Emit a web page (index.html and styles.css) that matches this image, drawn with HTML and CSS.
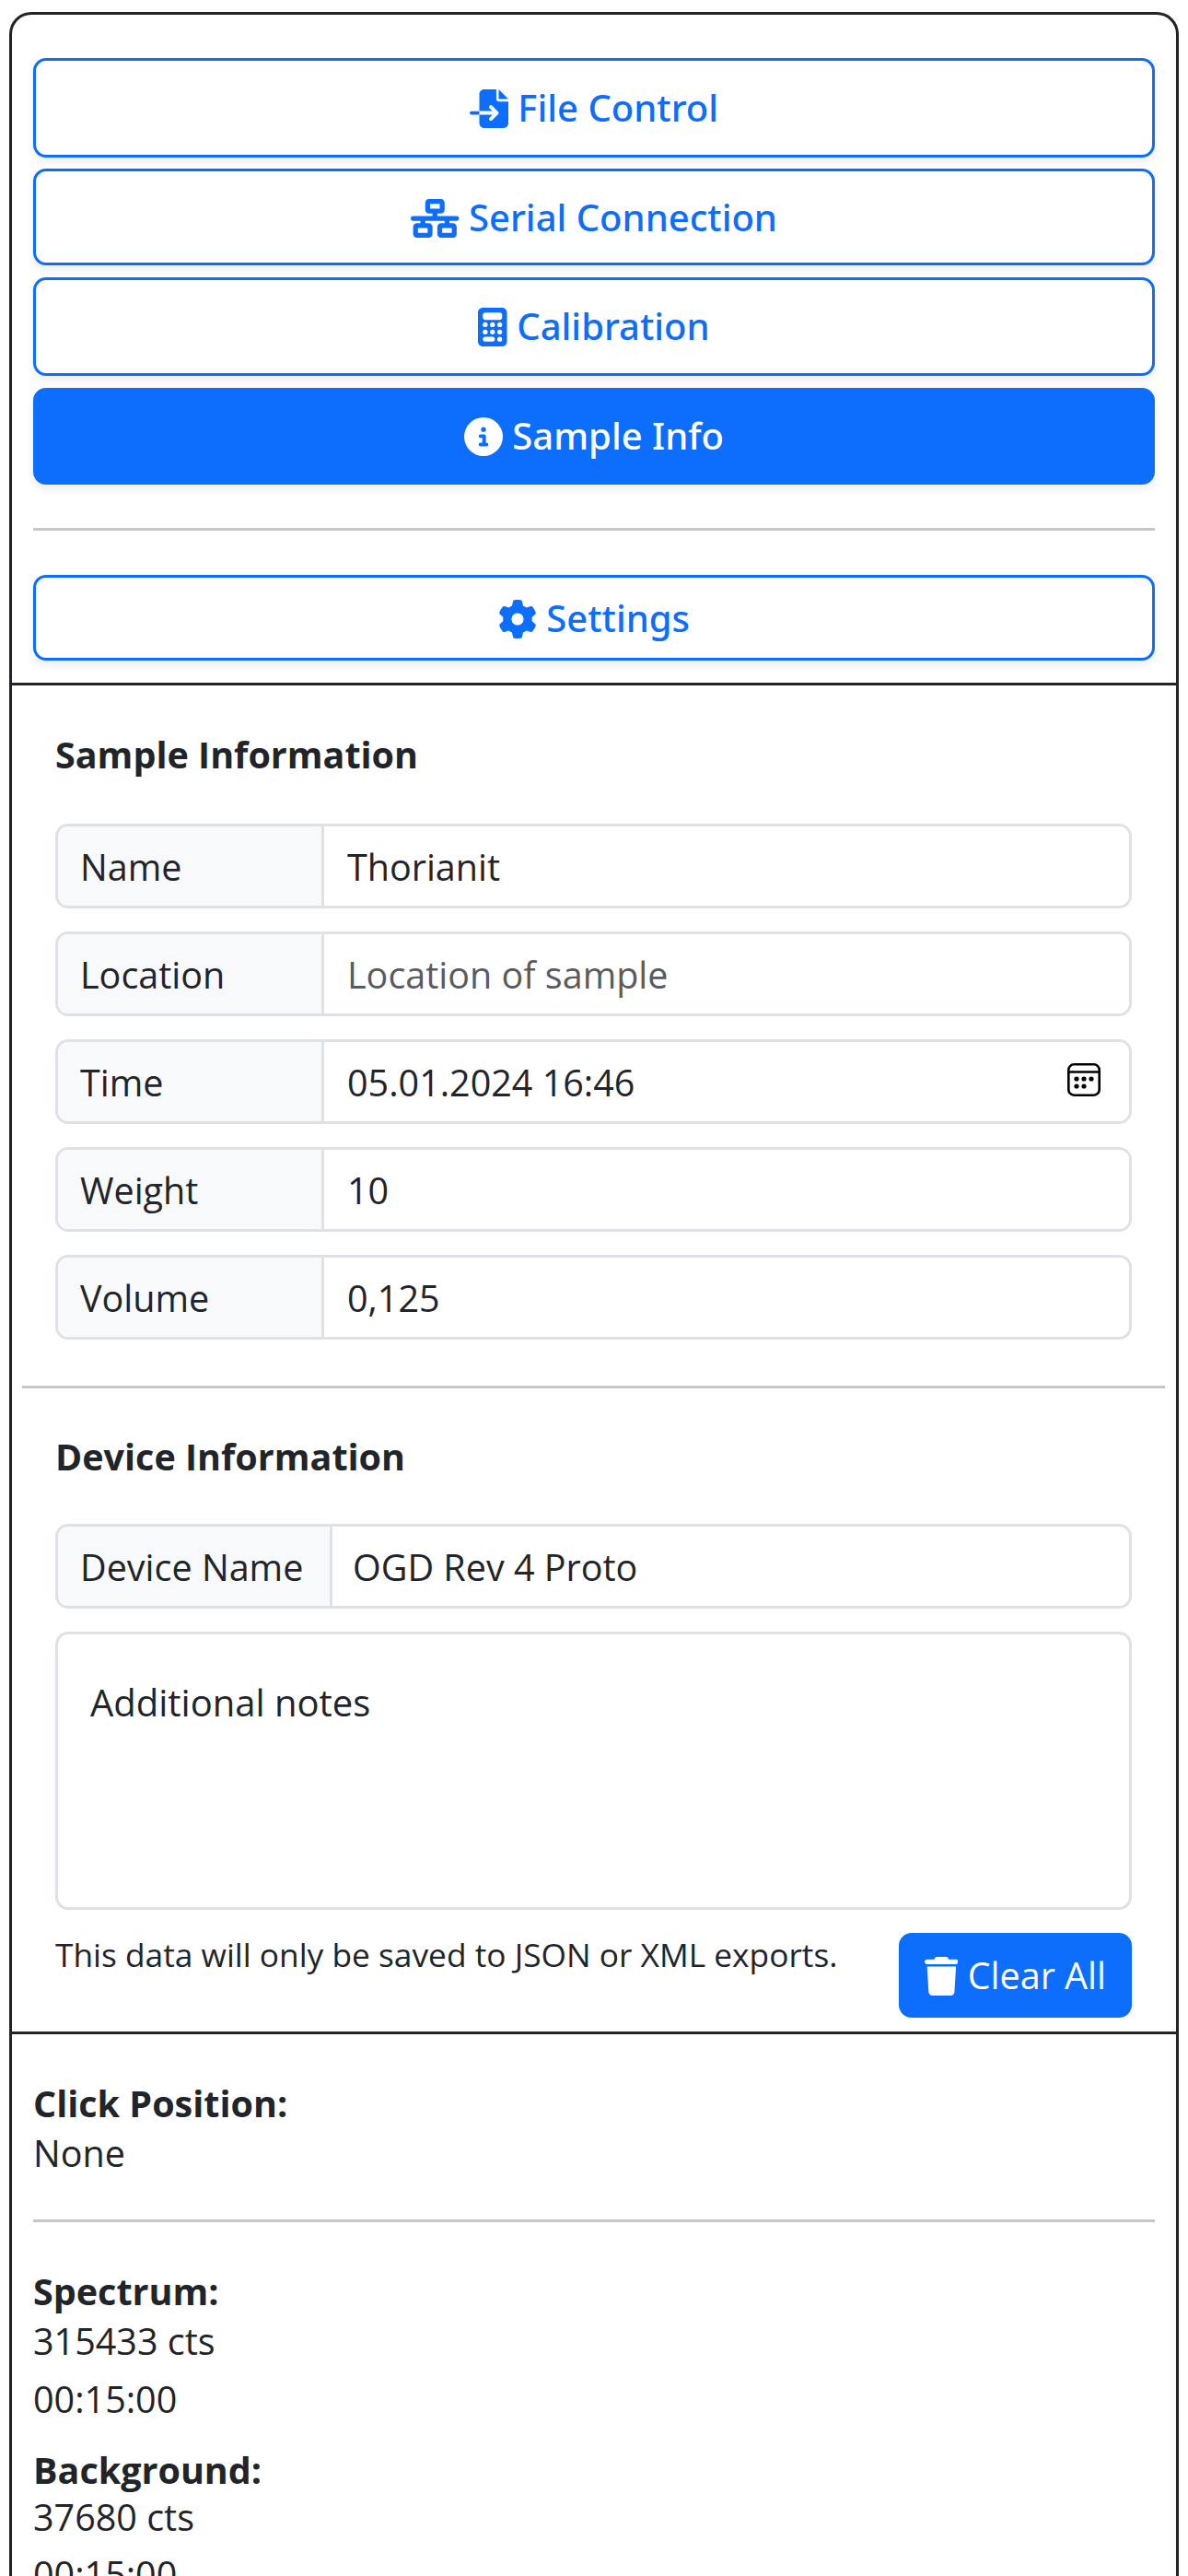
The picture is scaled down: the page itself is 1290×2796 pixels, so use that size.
FILE: index.html
```html
<!DOCTYPE html>
<html>
<head>
    <title>Sample Info</title>
    <link rel="stylesheet" href="styles.css">
</head>
<body>
    <div class="panel">
        <div class="nav-section">
            <button type="button" class="nav-btn">
                <svg class="icon" viewBox="0 0 512 512"><path d="M128 64c0-35.3 28.7-64 64-64H352V128c0 17.7 14.3 32 32 32H512V448c0 35.3-28.7 64-64 64H192c-35.3 0-64-28.7-64-64V336H302.1l-39 39c-9.4 9.4-9.4 24.6 0 33.9s24.6 9.4 33.9 0l80-80c9.4-9.4 9.4-24.6 0-33.9l-80-80c-9.4-9.4-24.6-9.4-33.9 0s-9.4 24.6 0 33.9l39 39H128V64zm0 224v48H24c-13.3 0-24-10.7-24-24s10.7-24 24-24H128zM512 128H384V0L512 128z"/></svg>
                File Control
            </button>
            <button type="button" class="nav-btn nav-btn-short">
                <svg class="icon" viewBox="0 0 640 512"><path d="M256 64H384v64H256V64zM240 0c-26.5 0-48 21.5-48 48v96c0 26.5 21.5 48 48 48h48v32H32c-17.7 0-32 14.3-32 32s14.3 32 32 32h96v32H80c-26.5 0-48 21.5-48 48v96c0 26.5 21.5 48 48 48H240c26.5 0 48-21.5 48-48V368c0-26.5-21.5-48-48-48H192V288H448v32H400c-26.5 0-48 21.5-48 48v96c0 26.5 21.5 48 48 48H560c26.5 0 48-21.5 48-48V368c0-26.5-21.5-48-48-48H512V288h96c17.7 0 32-14.3 32-32s-14.3-32-32-32H352V192h48c26.5 0 48-21.5 48-48V48c0-26.5-21.5-48-48-48H240zM96 448V384H224v64H96zm320-64H544v64H416V384z"/></svg>
                Serial Connection
            </button>
            <button type="button" class="nav-btn">
                <svg class="icon" viewBox="0 0 384 512"><path d="M64 0C28.7 0 0 28.7 0 64V448c0 35.3 28.7 64 64 64H320c35.3 0 64-28.7 64-64V64c0-35.3-28.7-64-64-64H64zM96 64H288c17.7 0 32 14.3 32 32v32c0 17.7-14.3 32-32 32H96c-17.7 0-32-14.3-32-32V96c0-17.7 14.3-32 32-32zm32 160a32 32 0 1 1 -64 0 32 32 0 1 1 64 0zM96 352a32 32 0 1 1 0-64 32 32 0 1 1 0 64zM64 416c0-17.7 14.3-32 32-32h96c17.7 0 32 14.3 32 32s-14.3 32-32 32H96c-17.7 0-32-14.3-32-32zM192 256a32 32 0 1 1 0-64 32 32 0 1 1 0 64zm32 64a32 32 0 1 1 -64 0 32 32 0 1 1 64 0zm64-64a32 32 0 1 1 0-64 32 32 0 1 1 0 64zm32 64a32 32 0 1 1 -64 0 32 32 0 1 1 64 0zM288 448a32 32 0 1 1 0-64 32 32 0 1 1 0 64z"/></svg>
                Calibration
            </button>
            <button type="button" class="nav-btn nav-btn-short active">
                <svg class="icon" viewBox="0 0 512 512"><path d="M256 512A256 256 0 1 0 256 0a256 256 0 1 0 0 512zM216 336h24V272H216c-13.3 0-24-10.7-24-24s10.7-24 24-24h48c13.3 0 24 10.7 24 24v88h8c13.3 0 24 10.7 24 24s-10.7 24-24 24H216c-13.3 0-24-10.7-24-24s10.7-24 24-24zm40-208a32 32 0 1 1 0 64 32 32 0 1 1 0-64z"/></svg>
                Sample Info
            </button>
            <hr class="rule nav-rule">
            <button type="button" class="nav-btn nav-btn-settings">
                <svg class="icon" viewBox="0 0 512 512"><path d="M495.9 166.6c3.2 8.7 .5 18.4-6.4 24.6l-43.3 39.4c1.1 8.3 1.7 16.8 1.7 25.4s-.6 17.1-1.7 25.4l43.3 39.4c6.9 6.2 9.6 15.9 6.4 24.6c-4.4 11.9-9.7 23.3-15.8 34.3l-4.7 8.1c-6.6 11-14 21.4-22.1 31.2c-5.9 7.2-15.7 9.6-24.5 6.8l-55.7-17.7c-13.4 10.3-28.2 18.9-44 25.4l-12.5 57.1c-2 9.1-9 16.3-18.2 17.8c-13.8 2.3-28 3.5-42.5 3.5s-28.7-1.2-42.5-3.5c-9.2-1.5-16.2-8.7-18.2-17.8l-12.5-57.1c-15.8-6.5-30.6-15.1-44-25.4L83.1 425.9c-8.8 2.8-18.6 .3-24.5-6.8c-8.1-9.8-15.5-20.2-22.1-31.2l-4.7-8.1c-6.1-11-11.4-22.4-15.8-34.3c-3.2-8.7-.5-18.4 6.4-24.6l43.3-39.4C64.6 273.1 64 264.6 64 256s.6-17.1 1.7-25.4L22.4 191.2c-6.9-6.2-9.6-15.9-6.4-24.6c4.4-11.9 9.7-23.3 15.8-34.3l4.7-8.1c6.6-11 14-21.4 22.1-31.2c5.9-7.2 15.7-9.6 24.5-6.8l55.7 17.7c13.4-10.3 28.2-18.9 44-25.4l12.5-57.1c2-9.1 9-16.3 18.2-17.8C227.3 1.2 241.5 0 256 0s28.7 1.2 42.5 3.5c9.2 1.5 16.2 8.7 18.2 17.8l12.5 57.1c15.8 6.5 30.6 15.1 44 25.4l55.7-17.7c8.8-2.8 18.6-.3 24.5 6.8c8.1 9.8 15.5 20.2 22.1 31.2l4.7 8.1c6.1 11 11.4 22.4 15.8 34.3zM256 336a80 80 0 1 0 0-160 80 80 0 1 0 0 160z"/></svg>
                Settings
            </button>
        </div>

        <div class="info-section">
            <div class="info-block">
                <h5 class="info-title">Sample Information</h5>
                <div class="field"><span class="field-label sample-label">Name</span><input class="field-input" type="text" value="Thorianit"></div>
                <div class="field"><span class="field-label sample-label">Location</span><input class="field-input" type="text" placeholder="Location of sample"></div>
                <div class="field">
                    <span class="field-label sample-label">Time</span><input class="field-input" type="text" value="05.01.2024 16:46">
                    <svg class="calendar" viewBox="0 0 36 36" fill="none" stroke="#000" stroke-width="2.6">
                        <rect x="1.3" y="1.3" width="33.4" height="33.4" rx="6"/>
                        <path d="M1.3 9.5h33.4"/>
                        <g fill="#000" stroke="none">
                            <circle cx="10" cy="17" r="2.6"/><circle cx="18" cy="17" r="2.6"/><circle cx="26" cy="17" r="2.6"/>
                            <circle cx="10" cy="25" r="2.6"/><circle cx="18" cy="25" r="2.6"/>
                        </g>
                    </svg>
                </div>
                <div class="field"><span class="field-label sample-label">Weight</span><input class="field-input" type="text" value="10"></div>
                <div class="field"><span class="field-label sample-label">Volume</span><input class="field-input" type="text" value="0,125"></div>
            </div>

            <hr class="rule info-rule">

            <div class="info-block device-block">
                <h5 class="info-title">Device Information</h5>
                <div class="field"><span class="field-label device-label">Device Name</span><input class="field-input device-input" type="text" value="OGD Rev 4 Proto"></div>
                <textarea class="notes" placeholder="Additional notes"></textarea>
                <div class="info-footer">
                    <span class="help">This data will only be saved to JSON or XML exports.</span>
                    <button type="button" class="clear-btn">
                        <svg class="icon" viewBox="0 0 448 512"><path d="M135.2 17.7L128 32H32C14.3 32 0 46.3 0 64S14.3 96 32 96H416c17.7 0 32-14.3 32-32s-14.3-32-32-32H320l-7.2-14.3C307.4 6.8 296.3 0 284.2 0H163.8c-12.1 0-23.2 6.8-28.6 17.7zM416 128H32L53.2 467c1.6 25.3 22.6 45 47.9 45H346.9c25.3 0 46.3-19.7 47.9-45L416 128z"/></svg>
                        Clear All
                    </button>
                </div>
            </div>
        </div>

        <div class="stats-section">
            <p class="stat"><b>Click Position:</b><br>None</p>
            <hr class="rule stats-rule">
            <p class="stat"><b>Spectrum:</b><br>315433 cts</p>
            <p class="stat stat-time">00:15:00</p>
            <p class="stat stat-tight"><b>Background:</b><br>37680 cts</p>
            <p class="stat stat-time">00:15:00</p>
        </div>
    </div>
</body>
</html>
```

FILE: styles.css
```css
html, body {
    height: 2796px;
    overflow: hidden;
}

body {
    margin: 0;
    padding: 13px 10px 0;
    box-sizing: border-box;
    background-color: #fff;
    font-family: "Open Sans", "Noto Sans", sans-serif;
    font-size: 39.5px;
    line-height: 54px;
    color: #212529;
}

.panel {
    border: 3px solid #212529;
    border-bottom: none;
    border-radius: 24px 24px 0 0;
}

.icon {
    height: 42px;
    width: auto;
    fill: currentColor;
    vertical-align: -7px;
}

.nav-section {
    display: flex;
    flex-direction: column;
    padding: 47px 23px 24px;
    gap: 12.5px;
}

.nav-btn {
    height: 107.5px;
    border: 3px solid #0d6efd;
    border-radius: 14px;
    background-color: #fff;
    color: #0d6efd;
    font: inherit;
    font-family: "Noto Sans", "Open Sans", sans-serif;
    font-size: 40px;
    font-weight: 500;
    box-shadow: 0 5px 10px rgba(0, 0, 0, 0.075);
}

.nav-btn-short {
    height: 105px;
}

.nav-btn-settings {
    height: 93px;
    padding-top: 3px;
}

.active {
    background-color: #0d6efd;
    color: #fff;
}

.rule {
    border: none;
    height: 3px;
    background-color: #c6c7c8;
    margin: 0;
}

.nav-rule {
    margin: 35px 0;
}

.info-section {
    border-top: 3px solid #212529;
    padding: 50px 12px 0 11px;
}

.info-block {
    padding: 0 36px 0 36px;
}

.info-title {
    margin: 0 0 50px;
    font-size: 39.5px;
    font-weight: 700;
    line-height: 50px;
}

.field {
    position: relative;
    display: flex;
    height: 92px;
    margin-bottom: 25px;
    box-sizing: border-box;
    border: 3px solid #dee2e6;
    border-radius: 14px;
    overflow: hidden;
}

.field-label {
    display: flex;
    align-items: center;
    flex-shrink: 0;
    box-sizing: border-box;
    padding: 2px 24px 0;
    background-color: #f8f9fa;
    border-right: 3px solid #dee2e6;
}

.sample-label {
    width: 289px;
}

.device-label {
    width: 298px;
}

.field-input {
    flex: 1;
    min-width: 0;
    border: none;
    outline: none;
    padding: 2px 25px 0;
    font: inherit;
    color: #212529;
}

.device-input {
    padding-left: 22px;
}

.field-input::placeholder {
    color: #595c5f;
    opacity: 1;
}

.calendar {
    position: absolute;
    right: 31px;
    top: 23px;
    width: 36px;
    height: 36px;
}

.info-rule {
    margin: 50px 0 0;
}

.device-block {
    padding-top: 49px;
}

.device-block .info-title {
    margin-bottom: 48px;
}

.notes {
    display: block;
    width: 100%;
    height: 302px;
    box-sizing: border-box;
    border: 3px solid #dee2e6;
    border-radius: 14px;
    padding: 47px 35px 0;
    font: inherit;
    font-size: 40px;
    resize: none;
    outline: none;
}

.notes::placeholder {
    color: #212529;
    opacity: 1;
}

.info-footer {
    display: flex;
    justify-content: space-between;
    align-items: flex-start;
    margin-top: 25px;
    padding-bottom: 15px;
}

.help {
    font-size: 35.3px;
    line-height: 46px;
}

.clear-btn {
    height: 92px;
    padding: 0 28px;
    border: none;
    border-radius: 14px;
    background-color: #0d6efd;
    color: #fff;
    font: inherit;
}

.stats-section {
    border-top: 3px solid #212529;
    padding: 48px 23px 0;
}

.stat {
    margin: 0;
}

.stats-rule {
    margin: 45px 0 48px;
}

.stat-time {
    margin: 9px 0 25px;
}

.stat-tight {
    line-height: 51px;
}
```
